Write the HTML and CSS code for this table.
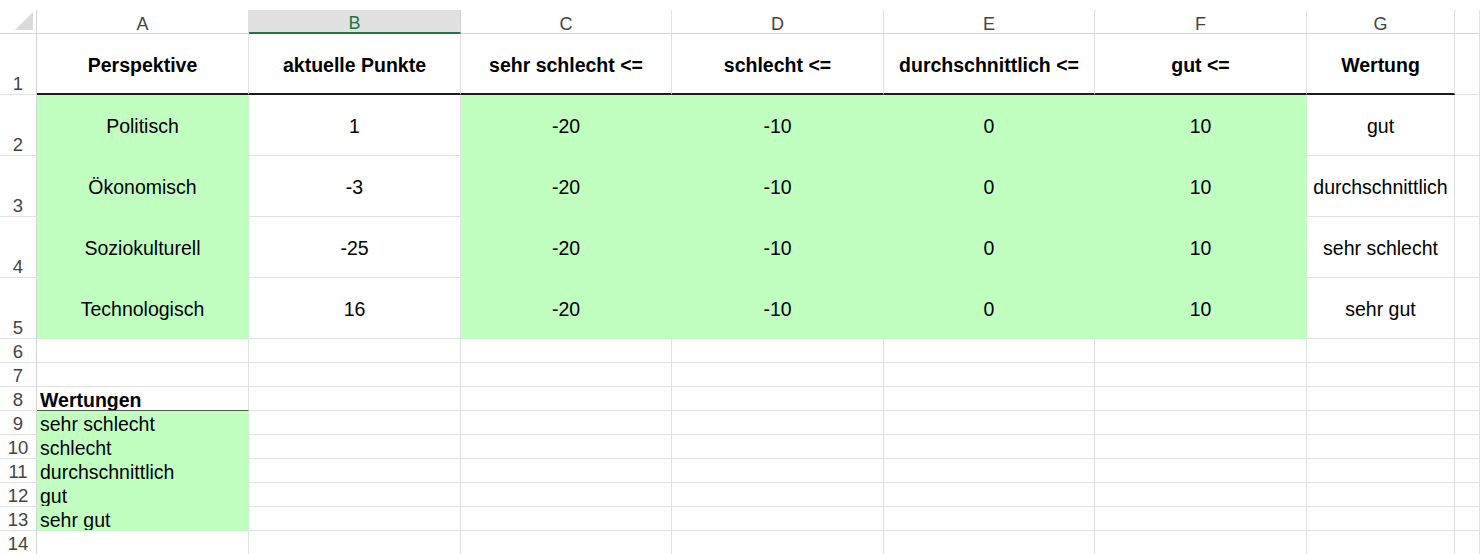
FILE: index.html
```html
<!DOCTYPE html>
<html lang="de">
<head>
<meta charset="utf-8">
<title>Perspektiven</title>
<link rel="stylesheet" href="styles.css">
</head>
<body>
<div class="sheet">
  <!-- column headers -->
  <div class="corner"><span class="tri"></span></div>
  <div class="colh">A</div>
  <div class="colh sel">B</div>
  <div class="colh">C</div>
  <div class="colh">D</div>
  <div class="colh">E</div>
  <div class="colh">F</div>
  <div class="colh">G</div>
  <div class="colh"></div>

  <!-- row 1 -->
  <div class="rowh">1</div>
  <div class="c mid b thick">Perspektive</div>
  <div class="c mid b thick">aktuelle Punkte</div>
  <div class="c mid b thick">sehr schlecht &lt;=</div>
  <div class="c mid b thick">schlecht &lt;=</div>
  <div class="c mid b thick">durchschnittlich &lt;=</div>
  <div class="c mid b thick">gut &lt;=</div>
  <div class="c mid b thick">Wertung</div>
  <div class="c"></div>

  <!-- row 2 -->
  <div class="rowh">2</div>
  <div class="c mid g">Politisch</div>
  <div class="c mid">1</div>
  <div class="c mid g">-20</div>
  <div class="c mid g">-10</div>
  <div class="c mid g">0</div>
  <div class="c mid g">10</div>
  <div class="c mid">gut</div>
  <div class="c"></div>

  <!-- row 3 -->
  <div class="rowh">3</div>
  <div class="c mid g">Ökonomisch</div>
  <div class="c mid">-3</div>
  <div class="c mid g">-20</div>
  <div class="c mid g">-10</div>
  <div class="c mid g">0</div>
  <div class="c mid g">10</div>
  <div class="c mid">durchschnittlich</div>
  <div class="c"></div>

  <!-- row 4 -->
  <div class="rowh">4</div>
  <div class="c mid g">Soziokulturell</div>
  <div class="c mid">-25</div>
  <div class="c mid g">-20</div>
  <div class="c mid g">-10</div>
  <div class="c mid g">0</div>
  <div class="c mid g">10</div>
  <div class="c mid">sehr schlecht</div>
  <div class="c"></div>

  <!-- row 5 -->
  <div class="rowh">5</div>
  <div class="c mid g">Technologisch</div>
  <div class="c mid">16</div>
  <div class="c mid g">-20</div>
  <div class="c mid g">-10</div>
  <div class="c mid g">0</div>
  <div class="c mid g">10</div>
  <div class="c mid">sehr gut</div>
  <div class="c"></div>

  <!-- row 6 -->
  <div class="rowh sm">6</div>
  <div class="c"></div><div class="c"></div><div class="c"></div><div class="c"></div><div class="c"></div><div class="c"></div><div class="c"></div><div class="c"></div>

  <!-- row 7 -->
  <div class="rowh sm">7</div>
  <div class="c"></div><div class="c"></div><div class="c"></div><div class="c"></div><div class="c"></div><div class="c"></div><div class="c"></div><div class="c"></div>

  <!-- row 8 -->
  <div class="rowh sm">8</div>
  <div class="c lft b under">Wertungen</div>
  <div class="c"></div><div class="c"></div><div class="c"></div><div class="c"></div><div class="c"></div><div class="c"></div><div class="c"></div>

  <!-- row 9 -->
  <div class="rowh sm">9</div>
  <div class="c lft g">sehr schlecht</div>
  <div class="c"></div><div class="c"></div><div class="c"></div><div class="c"></div><div class="c"></div><div class="c"></div><div class="c"></div>

  <!-- row 10 -->
  <div class="rowh sm">10</div>
  <div class="c lft g">schlecht</div>
  <div class="c"></div><div class="c"></div><div class="c"></div><div class="c"></div><div class="c"></div><div class="c"></div><div class="c"></div>

  <!-- row 11 -->
  <div class="rowh sm">11</div>
  <div class="c lft g">durchschnittlich</div>
  <div class="c"></div><div class="c"></div><div class="c"></div><div class="c"></div><div class="c"></div><div class="c"></div><div class="c"></div>

  <!-- row 12 -->
  <div class="rowh sm">12</div>
  <div class="c lft g">gut</div>
  <div class="c"></div><div class="c"></div><div class="c"></div><div class="c"></div><div class="c"></div><div class="c"></div><div class="c"></div>

  <!-- row 13 -->
  <div class="rowh sm">13</div>
  <div class="c lft g">sehr gut</div>
  <div class="c"></div><div class="c"></div><div class="c"></div><div class="c"></div><div class="c"></div><div class="c"></div><div class="c"></div>

  <!-- row 14 -->
  <div class="rowh sm">14</div>
  <div class="c"></div><div class="c"></div><div class="c"></div><div class="c"></div><div class="c"></div><div class="c"></div><div class="c"></div><div class="c"></div>
</div>
</body>
</html>
```

FILE: styles.css
```css
html, body {
  margin: 0;
  padding: 0;
  background: #ffffff;
  overflow: hidden;
}

body {
  padding-top: 10px;
  font-family: "Liberation Sans", Arial, sans-serif;
  color: #000000;
}

.sheet {
  display: grid;
  grid-template-columns: 37px 212px 212px 211px 212px 211px 212px 148px 1fr;
  grid-template-rows: 24px 61px 61px 61px 61px 61px repeat(9, 24px);
  width: 1480px;
}

.corner {
  position: relative;
  border-right: 1px solid #d4d4d4;
  border-bottom: 1px solid #d4d4d4;
  box-sizing: border-box;
}

.tri {
  position: absolute;
  right: 3px;
  bottom: 3px;
  width: 0;
  height: 0;
  border-left: 18px solid transparent;
  border-bottom: 18px solid #dadada;
}

.colh {
  display: flex;
  align-items: center;
  justify-content: center;
  padding-top: 5px;
  font-size: 18px;
  color: #444444;
  border-right: 1px solid #e1e1e1;
  border-bottom: 1px solid #d4d4d4;
  box-sizing: border-box;
}

.colh.sel {
  background: #e1e1e1;
  color: #217346;
  border-bottom: 2px solid #217346;
  border-right-color: #d0d0d0;
}

.rowh {
  display: flex;
  align-items: flex-end;
  justify-content: center;
  font-size: 18.5px;
  line-height: 20px;
  padding-bottom: 0;
  color: #444444;
  border-right: 1px solid #d4d4d4;
  border-bottom: 1px solid #e1e1e1;
  box-sizing: border-box;
}

.c {
  display: flex;
  font-size: 19.5px;
  line-height: 22px;
  border-right: 1px solid #e1e1e1;
  border-bottom: 1px solid #e1e1e1;
  box-sizing: border-box;
  white-space: nowrap;
  overflow: hidden;
}

.mid {
  align-items: center;
  justify-content: center;
  padding-top: 2px;
}

.lft {
  align-items: flex-end;
  justify-content: flex-start;
  padding-left: 3px;
  line-height: 19px;
}

.b {
  font-weight: bold;
}

.g {
  background: #c0ffc0;
  border-right-color: #c0ffc0;
  border-bottom-color: #c0ffc0;
}

.thick {
  border-bottom: 2px solid #1a1a1a;
  padding-top: 3px;
}

.under {
  border-bottom: 1px solid #555555;
}
```
